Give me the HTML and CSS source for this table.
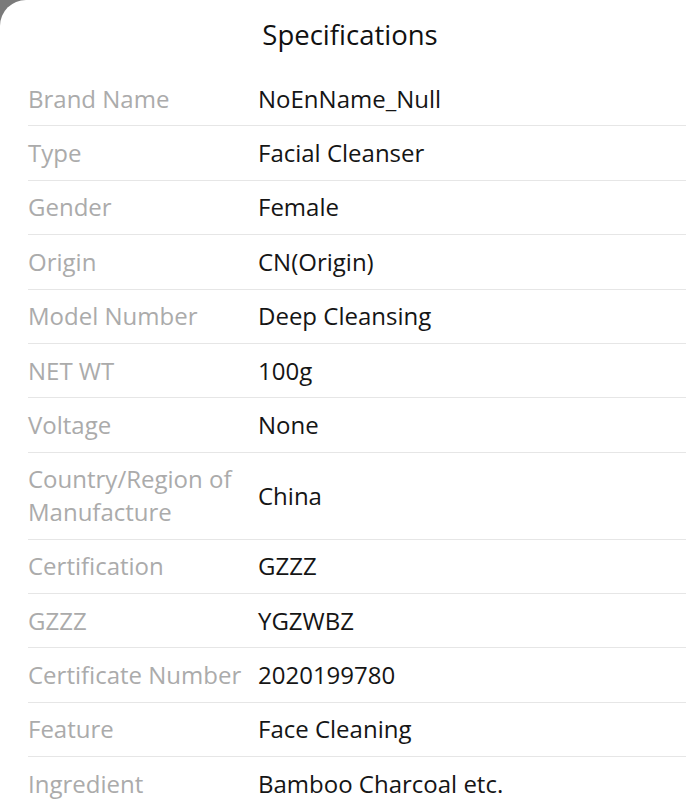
FILE: index.html
```html
<!DOCTYPE html>
<html lang="en">
<head>
<meta charset="utf-8">
<title>Specifications</title>
<link rel="stylesheet" href="styles.css">
</head>
<body>
<div class="sheet">
  <h1 class="title">Specifications</h1>
  <div class="specs">
    <div class="row"><div class="label">Brand Name</div><div class="value">NoEnName_Null</div></div>
    <div class="row"><div class="label">Type</div><div class="value">Facial Cleanser</div></div>
    <div class="row"><div class="label">Gender</div><div class="value">Female</div></div>
    <div class="row"><div class="label">Origin</div><div class="value">CN(Origin)</div></div>
    <div class="row"><div class="label">Model Number</div><div class="value">Deep Cleansing</div></div>
    <div class="row"><div class="label">NET WT</div><div class="value">100g</div></div>
    <div class="row"><div class="label">Voltage</div><div class="value">None</div></div>
    <div class="row"><div class="label">Country/Region of Manufacture</div><div class="value">China</div></div>
    <div class="row"><div class="label">Certification</div><div class="value">GZZZ</div></div>
    <div class="row"><div class="label">GZZZ</div><div class="value">YGZWBZ</div></div>
    <div class="row"><div class="label">Certificate Number</div><div class="value">2020199780</div></div>
    <div class="row"><div class="label">Feature</div><div class="value">Face Cleaning</div></div>
    <div class="row"><div class="label">Ingredient</div><div class="value">Bamboo Charcoal etc.</div></div>
  </div>
</div>
</body>
</html>
```
FILE: styles.css
```css
html, body {
  margin: 0;
  padding: 0;
  background: #7a7a7a;
  height: 100%;
  overflow: hidden;
}
.sheet {
  background: #ffffff;
  border-top-left-radius: 26px;
  min-height: 803px;
  font-family: "Open Sans", "Noto Sans", sans-serif;
  padding: 0 14px 0 28px;
}
.title {
  margin: 0 0 0 -14px;
  height: 72px;
  padding-bottom: 2px;
  box-sizing: border-box;
  display: flex;
  align-items: center;
  justify-content: center;
  font-size: 27.5px;
  font-weight: 400;
  color: #111;
  line-height: 1;
}
.specs {
  display: flex;
  flex-direction: column;
}
.row {
  display: grid;
  grid-template-columns: 230px 1fr;
  align-items: center;
  padding: 10.5px 0;
  border-bottom: 1px solid #e6e6e6;
  font-size: 24px;
  line-height: 32.4px;
}
.label {
  color: #ababab;
}
.value {
  color: #151515;
}
```
